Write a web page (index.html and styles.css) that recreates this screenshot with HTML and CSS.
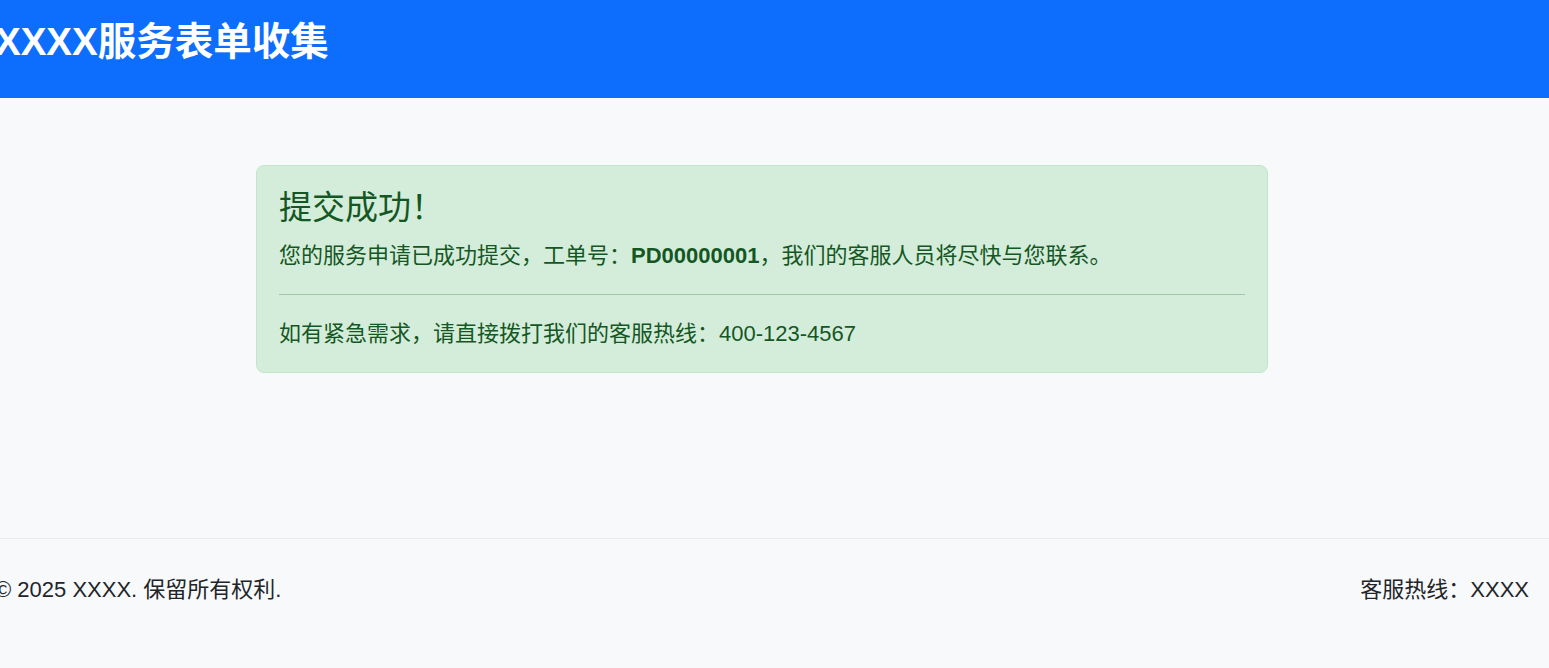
FILE: index.html
```html
<!DOCTYPE html>
<html lang="zh-CN">
<head>
    <meta charset="UTF-8">
    <meta name="viewport" content="width=device-width, initial-scale=1.0">
    <title>XXXX服务表单收集</title>
    <link rel="stylesheet" href="styles.css">
</head>
<body>
    <header class="site-header">
        <h1 class="site-title">XXXX服务表单收集</h1>
    </header>

    <main class="main">
        <div class="alert">
            <h4 class="alert-heading">提交成功！</h4>
            <p>您的服务申请已成功提交，工单号：<strong>PD00000001</strong>，我们的客服人员将尽快与您联系。</p>
            <hr>
            <p class="mb-0">如有紧急需求，请直接拨打我们的客服热线：400-123-4567</p>
        </div>
    </main>

    <footer class="site-footer">
        <span>© 2025 XXXX. 保留所有权利.</span>
        <span>客服热线：XXXX</span>
    </footer>
</body>
</html>
```

FILE: styles.css
```css
body {
    margin: 0;
    font-family: "Liberation Sans", "Noto Sans CJK SC", sans-serif;
    font-size: 22px;
    line-height: 1.5;
    color: #212529;
    background-color: #f8f9fa;
}
.site-header {
    background-color: #0d6efd;
    padding: 19px 0 33px;
}
.site-title {
    margin: 0 0 0 -5px;
    font-size: 38.5px;
    font-weight: 700;
    line-height: 46px;
    height: 46px;
    color: #fff;
}
.main {
    box-sizing: border-box;
    min-height: 440px;
    padding: 67px 25px 0 0;
}
.alert {
    max-width: 1012px;
    box-sizing: border-box;
    margin: 0 auto;
    padding: 22px;
    background-color: #d4edda;
    border: 1px solid #c3e6cb;
    border-radius: 8px;
    color: #155724;
}
.alert-heading {
    margin: 0 0 11px;
    font-size: 33px;
    font-weight: 400;
    line-height: 39.6px;
    height: 39.6px;
}
.alert p {
    margin: 0 0 22px;
    height: 33px;
}
.alert strong {
    font-weight: 700;
}
.alert hr {
    margin: 22px 0;
    border: 0;
    border-top: 1px solid #155724;
    opacity: .25;
}
.alert p.mb-0 {
    margin-bottom: 0;
}
.site-footer {
    display: flex;
    justify-content: space-between;
    border-top: 1px solid #e9ecef;
    padding: 34px 20px 63px 0;
    margin-left: -5px;
    line-height: 33px;
}
```
